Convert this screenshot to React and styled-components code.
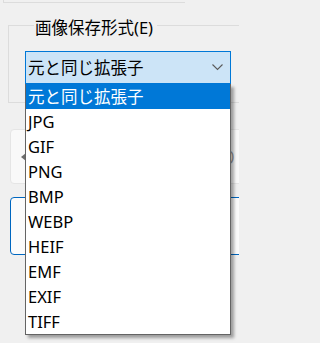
import styled, { createGlobalStyle } from "styled-components";

const formats = ["元と同じ拡張子", "JPG", "GIF", "PNG", "BMP", "WEBP", "HEIF", "EMF", "EXIF", "TIFF"];

const GlobalStyle = createGlobalStyle`
  html, body {
    margin: 0;
    padding: 0;
    background: #f0f0f0;
  }
  body {
    font-family: "Noto Sans", "Noto Sans CJK JP", sans-serif;
    font-size: 16.5px;
    color: #000;
  }
`;

const Page = styled.div`
  position: relative;
  width: 239px;
  height: 343px;
  overflow: hidden;
  background: #f0f0f0;
`;

const TopStub = styled.div`
  margin-left: 3px;
  width: 181px;
  height: 2px;
  border-left: 1px solid #dcdcdc;
  border-bottom: 1px solid #dcdcdc;
`;

const GroupBox = styled.fieldset`
  margin: 7px 0 0 8px;
  padding: 11px 0 18px 16px;
  width: 260px;
  box-sizing: border-box;
  border: 1px solid #dcdcdc;
  border-radius: 0;
  min-inline-size: 0;
`;

const Legend = styled.legend`
  margin-left: 9px;
  padding: 6px 4px 0 1px;
  line-height: 24px;
`;

const ComboBox = styled.div`
  display: flex;
  align-items: center;
  justify-content: space-between;
  width: 206px;
  height: 33px;
  box-sizing: border-box;
  padding: 0 7px 0 2px;
  border: 1px solid #0078d7;
  background: #cce4f7;
  line-height: 31px;
`;

const Panel = styled.div`
  display: flex;
  align-items: center;
  justify-content: space-between;
  margin: 26px 0 0 10px;
  width: 240px;
  height: 55px;
  box-sizing: border-box;
  padding: 0 12px 0 10px;
  background: #f9f9f9;
  border: 1px solid #e5e5e5;
  border-radius: 4px;
  color: #9a9a9a;
`;

const LeftArrow = styled.span`
  width: 0;
  height: 0;
  border-top: 4px solid transparent;
  border-bottom: 4px solid transparent;
  border-right: 5px solid #6c6c6c;
`;

const BlueBox = styled.div`
  margin: 13px 0 0 10px;
  width: 240px;
  height: 58px;
  box-sizing: border-box;
  border: 1px solid #0067c0;
  border-radius: 4px;
  background: #fbfbfb;
`;

const DropList = styled.ul`
  position: absolute;
  left: 25px;
  top: 84px;
  width: 206px;
  box-sizing: border-box;
  margin: 0;
  padding: 0;
  list-style: none;
  background: #fff;
  border: 1px solid #646464;
  border-top: none;
  box-shadow: 3px 3px 3px rgba(0, 0, 0, 0.35);
`;

const Item = styled.li`
  height: 25px;
  line-height: 25px;
  padding-left: 2px;
  white-space: nowrap;
  background: ${(p) => (p.$selected ? "#0078d7" : "transparent")};
  color: ${(p) => (p.$selected ? "#fff" : "#000")};
`;

function Chevron() {
  return (
    <svg width="11" height="7" viewBox="0 0 11 7">
      <polyline points="0.5,0.5 5.5,5.5 10.5,0.5" fill="none" stroke="#5a5a5a" strokeWidth="1.1" />
    </svg>
  );
}

export default function App() {
  return (
    <>
      <GlobalStyle />
      <Page>
        <TopStub />
        <GroupBox>
          <Legend>画像保存形式(E)</Legend>
          <ComboBox>
            <span>{formats[0]}</span>
            <Chevron />
          </ComboBox>
        </GroupBox>
        <Panel>
          <LeftArrow />
          <span>り</span>
        </Panel>
        <BlueBox />
        <DropList>
          {formats.map((f, i) => (
            <Item key={f} $selected={i === 0}>
              {f}
            </Item>
          ))}
        </DropList>
      </Page>
    </>
  );
}
